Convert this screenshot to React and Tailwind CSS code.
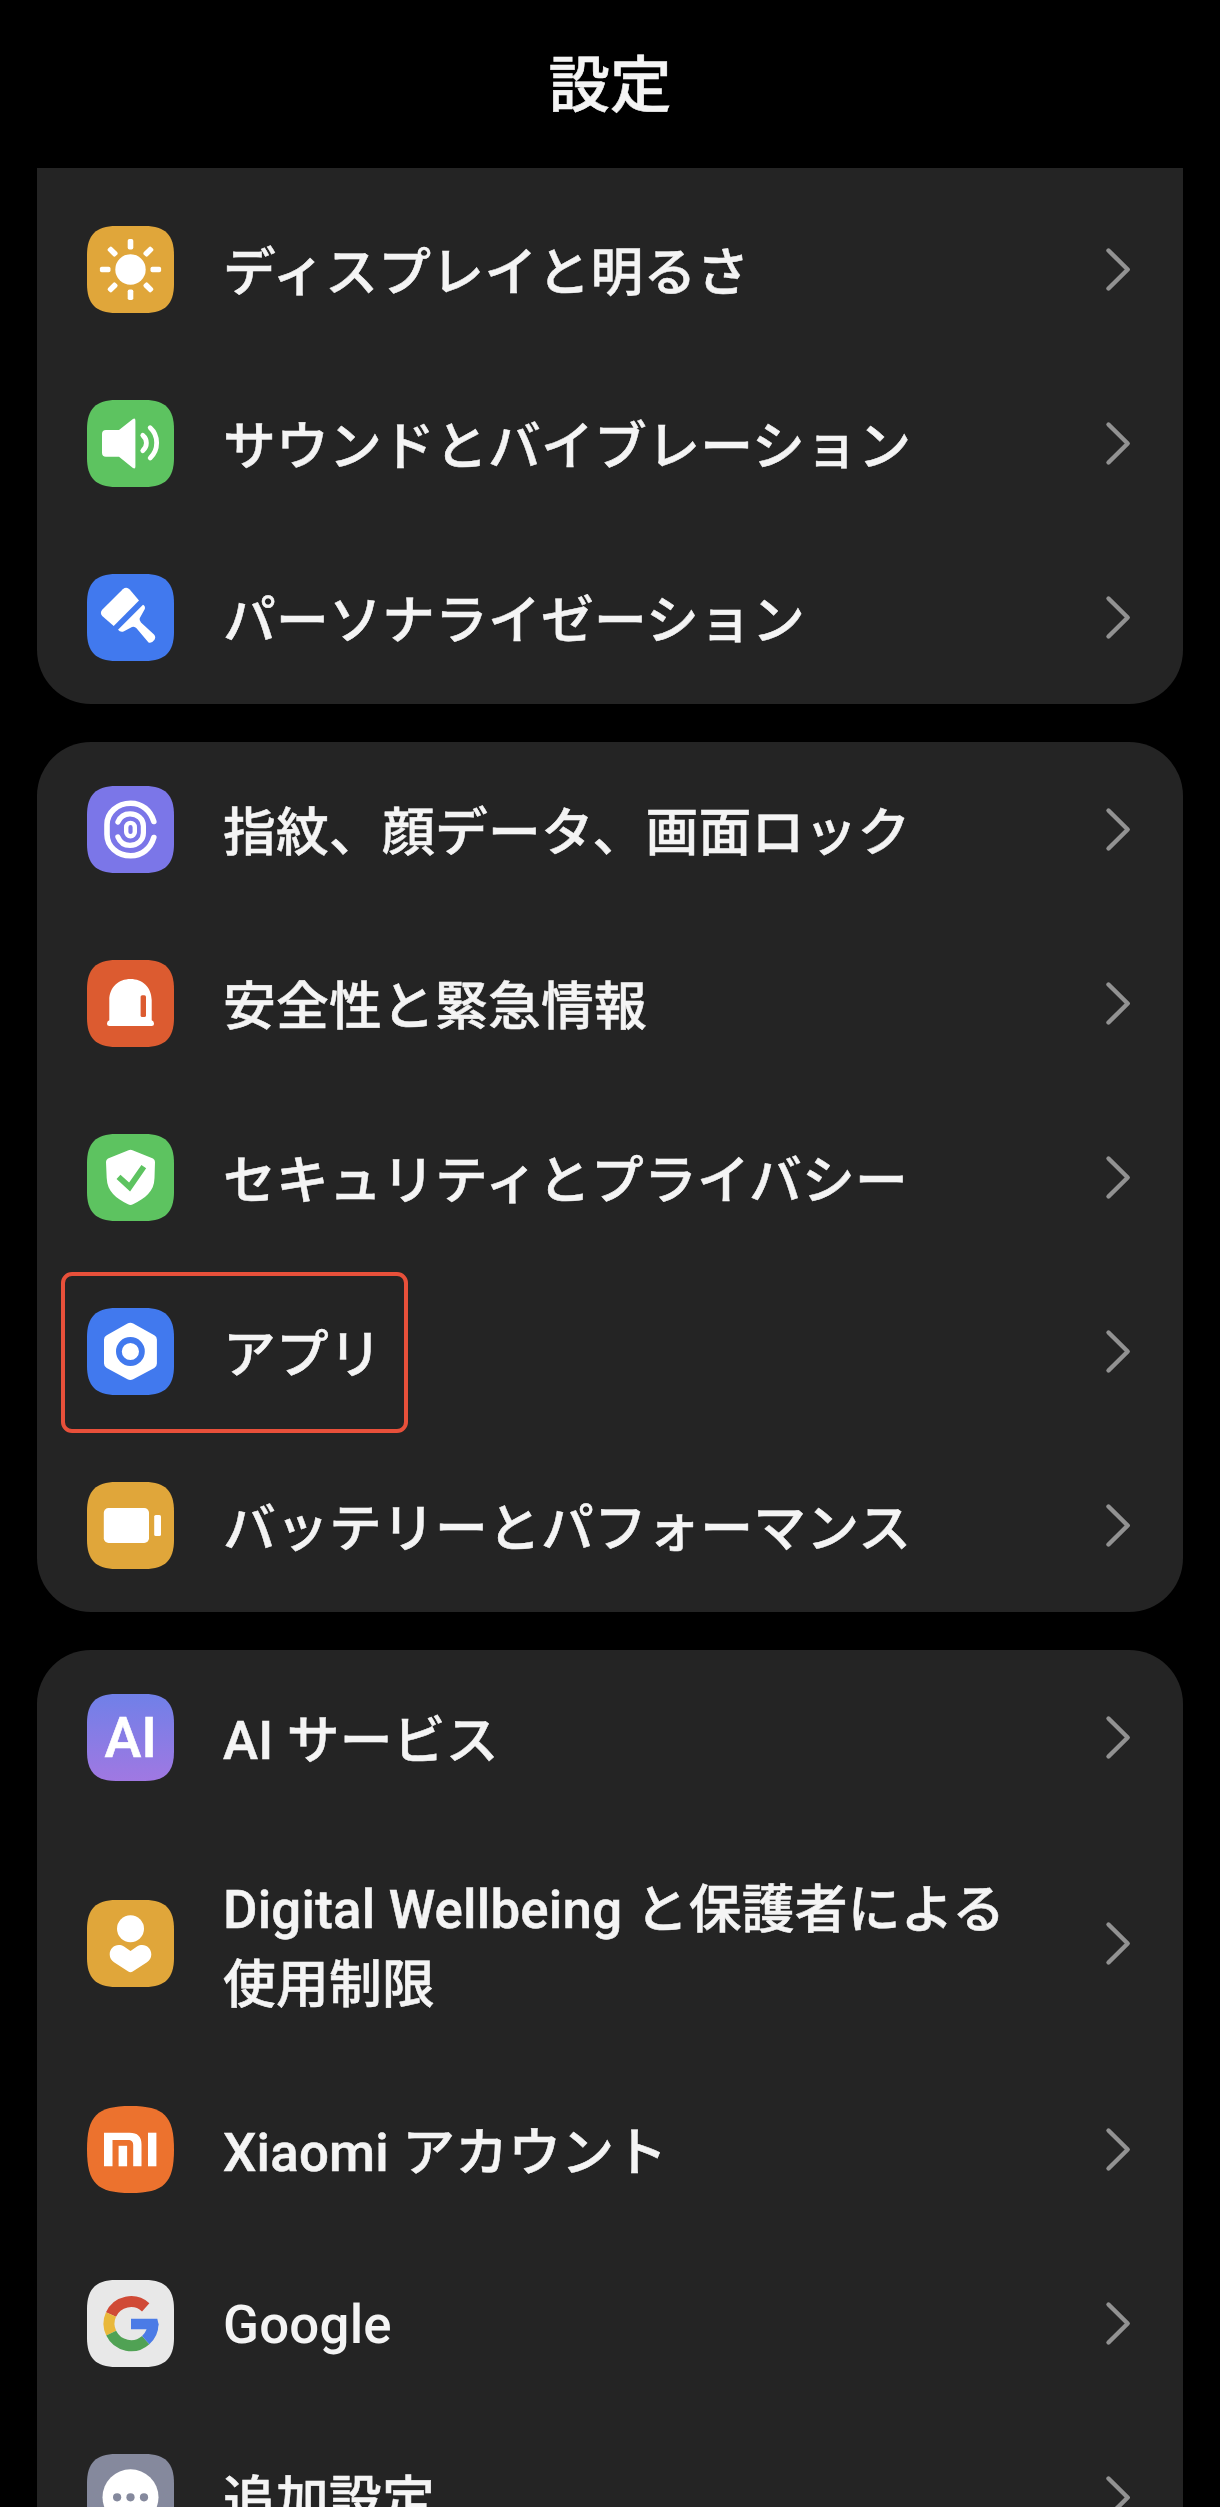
import React from "react";

const ROUNDED =
  "M0 29C0 9 9 0 29 0H58C78 0 87 9 87 29V58C87 78 78 87 58 87H29C9 87 0 78 0 58Z";
const SQUIRCLE =
  "M0 43.5C0 10 10 0 43.5 0S87 10 87 43.5S77 87 43.5 87S0 77 0 43.5Z";

function Tile({ color, shape = ROUNDED, children }) {
  return (
    <svg viewBox="0 0 87 87" className="size-[87px] shrink-0" fill="#fff">
      <path d={shape} fill={color} />
      {children}
    </svg>
  );
}

function SunIcon() {
  return (
    <Tile color="#e0a63a">
      <circle cx="43.5" cy="43.5" r="15.2" />
      {[0, 45, 90, 135, 180, 225, 270, 315].map((a) => (
        <rect key={a} x="40.7" y="12.9" width="5.6" height="10.6" rx="1.8" transform={`rotate(${a} 43.5 43.5)`} />
      ))}
    </Tile>
  );
}

function SoundIcon() {
  return (
    <Tile color="#5dc360">
      <path d="M19 30H32L45.6 19.2Q48.4 17.4 48.4 20.5V66.5Q48.4 69.6 45.6 67.8L32 56.7H19Q15 56.7 15 52.7V34Q15 30 19 30Z" />
      <g fill="none" stroke="#fff" strokeWidth="4.8" strokeLinecap="round">
        <path d="M55.8 35.4C60.6 39.5 60.6 46.5 55.8 50.6" />
        <path d="M63.2 27.7C71.8 35.5 71.8 50 63.2 57.9" />
      </g>
    </Tile>
  );
}

function BrushIcon() {
  return (
    <Tile color="#4179ee">
      <path d="M35.8 15.2Q39.5 12.3 42.7 15.4L52 26.5L26.7 52L15.2 42Q12.6 39 15.2 35.8Z" />
      <path d="M31 55.8L56 30.7Q58.6 32 57.8 35L52.7 44.2Q52 46.5 54 48.4L67 60.6Q69.2 63 67.5 65.8Q65 69.5 61.5 68.4L49.5 54.2Q47.5 52 45 53L37 57.3Q33.5 58.8 31 55.8Z" />
    </Tile>
  );
}

function FingerprintIcon() {
  return (
    <Tile color="#7b76e8">
      <g fill="none" stroke="#fff" strokeLinecap="round">
        <path strokeWidth="5.6" d="M66.8 35.5C63.5 24.5 55 17.2 43.7 17.2C30.5 17.2 20 26.5 20 38.5V48.5C20 60.5 30.5 69.8 43.7 69.8C55 69.8 63.5 62.5 66.8 51.5" />
        <path strokeWidth="5.2" d="M30.9 36C33 31 37.5 27.8 43 27.8C50.5 27.8 56.4 33 56.4 40V47C56.4 54 50.5 59.4 43 59.4C37.5 59.4 33 56.2 30.9 51" />
        <rect strokeWidth="4.4" x="39.2" y="36.9" width="8.6" height="13.3" rx="4.3" />
      </g>
    </Tile>
  );
}

function AlarmIcon() {
  return (
    <Tile color="#dc5b30">
      <path d="M22.3 40C22.3 27.5 31.5 19 43.5 19S64.7 27.5 64.7 40V60.3Q67 61 67 63.5Q67 66 64.5 66H22.5Q20 66 20 63.5Q20 61 22.3 60.3Z" />
      <rect x="53.6" y="35.2" width="5.4" height="21.8" rx="1.6" fill="#dc5b30" />
    </Tile>
  );
}

function ShieldIcon() {
  return (
    <Tile color="#5dc360">
      <path d="M41.5 16.2Q43.5 15.3 45.5 16.2L66 24.5Q68 25.5 68 28L67.5 44C67.2 58 58 64 46 70.3Q43.5 71.7 41 70.3C29 64 20.3 58 19.7 44L19 28Q19 25.5 21 24.5Z" />
      <path d="M31.5 42.8L42.6 53L56.8 32.7" fill="none" stroke="#5dc360" strokeWidth="5.8" />
    </Tile>
  );
}

function AppsIcon() {
  return (
    <Tile color="#4179ee">
      <path d="M40.5 15.6Q43.3 14 46.2 15.6L67.3 27.2Q69.9 28.6 69.9 31.5V55.5Q69.9 58.4 67.3 59.9L46.2 71.3Q43.3 72.9 40.5 71.3L19.7 59.9Q17 58.4 17 55.5V31.5Q17 28.6 19.7 27.2Z" />
      <circle cx="43.4" cy="43.5" r="11.5" fill="none" stroke="#4179ee" strokeWidth="5.8" />
    </Tile>
  );
}

function BatteryIcon() {
  return (
    <Tile color="#e0a63a">
      <rect x="16.8" y="26" width="45.2" height="35" rx="4.8" />
      <rect x="67.2" y="33" width="6.8" height="21" rx="1.6" />
    </Tile>
  );
}

function AiIcon() {
  return (
    <Tile color="url(#ai-fill)">
      <defs>
        <linearGradient id="ai-fill" x1="0" y1="0" x2="0" y2="1">
          <stop offset="0" stopColor="#7080e8" />
          <stop offset="1" stopColor="#a078e2" />
        </linearGradient>
      </defs>
      <text x="43.7" y="63.3" textAnchor="middle" className="font-[Roboto,sans-serif] text-[55.5px] font-medium" stroke="#fff" strokeWidth="0.6">
        AI
      </text>
    </Tile>
  );
}

function WellbeingIcon() {
  return (
    <Tile color="#e0a63a">
      <circle cx="43.5" cy="28.7" r="13.5" />
      <path d="M43.5 50.9L37 46.6C30 42.5 22.7 47.5 22.7 54.5C22.7 58 24.5 60.5 27 62.3L41.3 71.5Q43.5 73 45.7 71.5L60 62.3C62.5 60.5 64.3 58 64.3 54.5C64.3 47.5 57 42.5 50 46.6Z" />
    </Tile>
  );
}

function XiaomiIcon() {
  return (
    <Tile color="#ec722e" shape={SQUIRCLE}>
      <path d="M17 26.7H42.5C50.5 26.7 54.5 30.5 54.5 38.5V60.3H46.2V39C46.2 35.5 44.5 34 41 34H25.5V60.3H17Z" />
      <rect x="31.6" y="39.8" width="8.5" height="20.5" />
      <rect x="61" y="26.7" width="8.4" height="33.6" />
    </Tile>
  );
}

function GoogleIcon() {
  return (
    <Tile color="#e8e8e8">
      <g fill="none" strokeWidth="11">
        <path stroke="#d04a36" d="M58.7 27.3A22 22 0 0 0 23.97 34.6" />
        <path stroke="#e9b83b" d="M23.97 34.6A22 22 0 0 0 24.2 53.2" />
        <path stroke="#50a254" d="M24.2 53.2A22 22 0 0 0 58.7 60.05" />
        <path stroke="#4b7be6" d="M58.7 60.05A22 22 0 0 0 66 43.7" />
      </g>
      <path fill="#4b7be6" d="M44 38.7H70.3L71.5 44L70.5 49.3H44Z" />
    </Tile>
  );
}

function MoreIcon() {
  return (
    <Tile color="#85899d">
      <circle cx="43.5" cy="43.3" r="28" />
      {[30.1, 43.5, 57].map((x) => (
        <circle key={x} cx={x} cy="43.3" r="4.1" fill="#85899d" />
      ))}
    </Tile>
  );
}

function Chevron() {
  return (
    <svg viewBox="0 0 28 46" className="mr-[51px] h-[46px] w-[28px] shrink-0" fill="none" stroke="#929292" strokeWidth="4.4" strokeLinecap="round" strokeLinejoin="round">
      <path d="M4.5 3.5L23.7 22.5L4.5 41.5" />
    </svg>
  );
}

function Row({ icon: Icon, lines, highlighted, latin }) {
  return (
    <li className={`relative flex shrink-0 items-center pt-px pl-[50px] ${lines.length > 1 ? "h-[238px]" : "h-[174px]"}`}>
      <Icon />
      <div
        className={`ml-[49px] flex-1 text-[52.8px] leading-[75px] font-medium tracking-[0.22px] whitespace-nowrap text-[#f4f4f4] ${
          latin ? "pt-[4px]" : "pt-[8px] [-webkit-text-stroke:0.5px_#f4f4f4]"
        }`}
      >
        {lines.map((line) => (
          <div key={line}>{line}</div>
        ))}
      </div>
      <Chevron />
      {highlighted && (
        <span className="absolute top-[8px] left-[24px] h-[161px] w-[347px] rounded-[11px] border-4 border-[#e8503a]" />
      )}
    </li>
  );
}

const groups = [
  {
    frame: "h-[536px] rounded-b-[54px] pt-[14px]",
    rows: [
      { icon: SunIcon, lines: ["ディスプレイと明るさ"] },
      { icon: SoundIcon, lines: ["サウンドとバイブレーション"] },
      { icon: BrushIcon, lines: ["パーソナライゼーション"] },
    ],
  },
  {
    frame: "rounded-[54px]",
    rows: [
      { icon: FingerprintIcon, lines: ["指紋、顔データ、画面ロック"] },
      { icon: AlarmIcon, lines: ["安全性と緊急情報"] },
      { icon: ShieldIcon, lines: ["セキュリティとプライバシー"] },
      { icon: AppsIcon, lines: ["アプリ"], highlighted: true },
      { icon: BatteryIcon, lines: ["バッテリーとパフォーマンス"] },
    ],
  },
  {
    frame: "rounded-t-[54px]",
    rows: [
      { icon: AiIcon, lines: ["AI サービス"] },
      { icon: WellbeingIcon, lines: ["Digital Wellbeing と保護者による", "使用制限"] },
      { icon: XiaomiIcon, lines: ["Xiaomi アカウント"] },
      { icon: GoogleIcon, lines: ["Google"], latin: true },
      { icon: MoreIcon, lines: ["追加設定"] },
    ],
  },
];

export default function App() {
  return (
    <main lang="ja" className="h-[2507px] w-[1220px] overflow-hidden bg-black font-[Roboto,'Noto_Sans_CJK_JP',sans-serif]">
      <header className="flex h-[168px] items-center justify-center pt-[4px]">
        <h1 className="text-[61.5px] leading-[80px] font-medium text-[#f4f4f4] [-webkit-text-stroke:0.6px_#f4f4f4]">設定</h1>
      </header>
      <div className="flex flex-col gap-[38px] px-[37px]">
        {groups.map((group, i) => (
          <ul key={i} className={`flex flex-col bg-[#242424] ${group.frame}`}>
            {group.rows.map((row) => (
              <Row key={row.lines[0]} {...row} />
            ))}
          </ul>
        ))}
      </div>
    </main>
  );
}
